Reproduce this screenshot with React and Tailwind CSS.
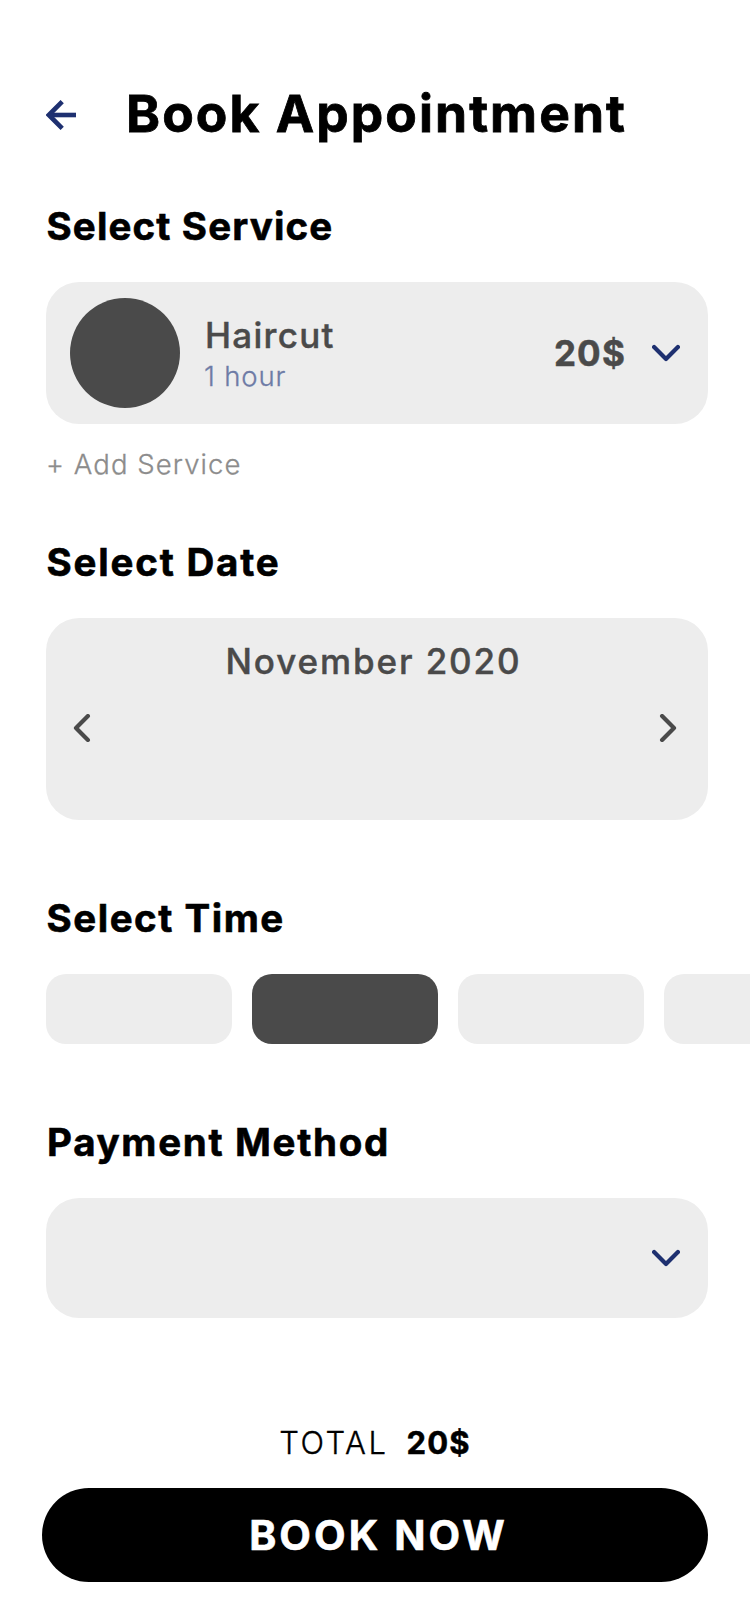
const slots = [
  { id: 'a', selected: false },
  { id: 'b', selected: true },
  { id: 'c', selected: false },
  { id: 'd', selected: false },
];

const rotations = { down: '', left: 'rotate-90', right: '-rotate-90' };

function Chevron({ direction = 'down', className = '' }) {
  return (
    <svg
      viewBox="0 0 28 28"
      className={`size-7 shrink-0 ${rotations[direction]} ${className}`}
      fill="none"
      stroke="currentColor"
      strokeWidth="4.2"
      strokeLinecap="round"
      strokeLinejoin="round"
    >
      <path d="M2.1 8.1 14 20 25.9 8.1" />
    </svg>
  );
}

function BackArrow() {
  return (
    <svg viewBox="0 0 30 30" className="size-[30px] shrink-0 text-[#1e3070]" fill="none" stroke="currentColor" strokeWidth="4.6">
      <path d="M30 15H3" />
      <path d="M16.2 1.6 2.8 15l13.4 13.4" />
    </svg>
  );
}

function Heading({ className, children }) {
  return (
    <h2 className={`h-11 text-[38.5px] leading-[44px] font-bold whitespace-nowrap [-webkit-text-stroke:0.6px_currentColor] ${className}`}>
      {children}
    </h2>
  );
}

export default function App() {
  return (
    <main className="flex h-[1624px] w-[750px] flex-col overflow-hidden bg-white pl-[46px] font-['Inter','Liberation_Sans',sans-serif] text-black">
      <header className="mt-[84px] flex h-[60px] items-center">
        <button className="mt-[2px]" aria-label="Back">
          <BackArrow />
        </button>
        <h1 className="ml-[50px] pb-[2px] text-[51.5px] leading-[60px] font-bold tracking-[2.08px] whitespace-nowrap [-webkit-text-stroke:0.8px_currentColor]">
          Book Appointment
        </h1>
      </header>

      <section className="mt-[60px]">
        <Heading className="ml-[0.5px] tracking-[1.14px]">Select Service</Heading>
        <div className="mt-[34px] flex h-[142px] w-[662px] items-center rounded-[33px] bg-[#ededed] pr-7 pl-6 text-[#4a4a4a]">
          <div className="size-[110px] shrink-0 rounded-full bg-[#4a4a4a]" />
          <div className="ml-6 flex flex-1 flex-col pt-[3px]">
            <span className="ml-px text-[35px] leading-[42px] font-medium tracking-[1.27px] [-webkit-text-stroke:0.4px_currentColor]">Haircut</span>
            <span className="text-[27.5px] leading-[40px] font-light tracking-[0.85px] text-[#6e7ba6] [-webkit-text-stroke:0.3px_currentColor]">
              1 hour
            </span>
          </div>
          <span className="text-[35px] leading-[42px] font-bold tracking-[1.18px] [-webkit-text-stroke:0.5px_currentColor]">20$</span>
          <Chevron className="ml-[26px] text-[#1e3070]" />
        </div>
        <button className="mt-[22px] block text-[27.5px] leading-[36px] font-light tracking-[1.07px] text-[#8c8c8c] [-webkit-text-stroke:0.3px_currentColor]">
          + Add Service
        </button>
      </section>

      <section className="mt-[58px]">
        <Heading className="ml-[0.5px] tracking-[1.8px]">Select Date</Heading>
        <div className="mt-[34px] flex h-[202px] w-[662px] flex-col rounded-[33px] bg-[#ededed] pt-[22px] pr-[26px] pl-[22px] text-[#4a4a4a]">
          <p className="pr-[3px] text-center text-[35px] leading-[42px] font-medium tracking-[1.9px] [-webkit-text-stroke:0.4px_currentColor]">
            November 2020
          </p>
          <div className="mt-8 flex justify-between">
            <Chevron direction="left" />
            <Chevron direction="right" />
          </div>
        </div>
      </section>

      <section className="mt-[76px]">
        <Heading className="ml-[0.5px] tracking-[1.52px]">Select Time</Heading>
        <div className="mt-[34px] flex gap-5">
          {slots.map(({ id, selected }) => (
            <div key={id} className={`h-[70px] w-[186px] shrink-0 rounded-[20px] ${selected ? 'bg-[#4a4a4a]' : 'bg-[#ededed]'}`} />
          ))}
        </div>
      </section>

      <section className="mt-[76px]">
        <Heading className="ml-px tracking-[1.68px]">Payment Method</Heading>
        <div className="mt-[34px] flex h-[120px] w-[662px] items-center justify-end rounded-[33px] bg-[#ededed] pr-7">
          <Chevron className="text-[#1e3070]" />
        </div>
      </section>

      <footer className="mt-[107px] -ml-1 w-[666px]">
        <p className="flex h-9 items-center justify-center text-[31px] leading-9">
          <span className="font-light tracking-[2.5px] [-webkit-text-stroke:0.3px_currentColor]">TOTAL</span>
          <span className="ml-[18px] font-bold tracking-[1.2px] [-webkit-text-stroke:0.5px_currentColor]">20$</span>
        </p>
        <button className="mt-[27px] block h-[94px] w-full rounded-full bg-black pl-[7px] text-center text-[41px] leading-[95px] font-bold tracking-[3.1px] text-white [-webkit-text-stroke:0.6px_currentColor]">
          BOOK NOW
        </button>
      </footer>
    </main>
  );
}
